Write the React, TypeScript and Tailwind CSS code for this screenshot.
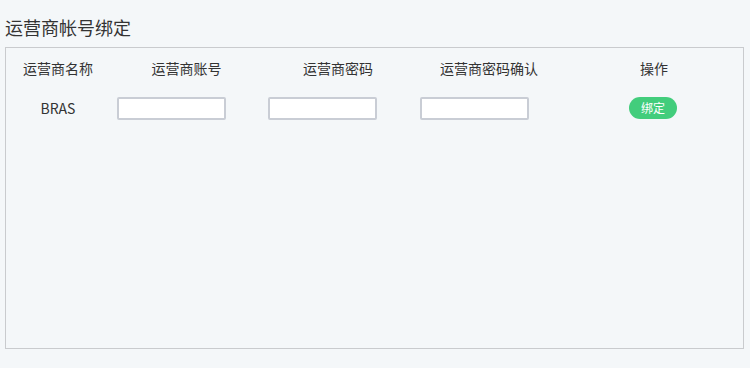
const font = "font-['Microsoft_YaHei','Noto_Sans_CJK_SC',sans-serif]";

function Field({ offset }: { offset: string }) {
  return (
    <div className={`flex items-center ${offset}`}>
      <input
        type="text"
        className="w-[109px] h-[23px] border-2 border-[#c9cdd5] bg-white outline-none rounded-[2px]"
      />
    </div>
  );
}

export default function App() {
  const headers = ["运营商名称", "运营商账号", "运营商密码", "运营商密码确认", "操作"];

  return (
    <div className={`w-[750px] h-[368px] bg-[#f4f7f9] px-[5px] pt-[15px] text-[#333] ${font}`}>
      <h1 className="text-[18px] leading-[24px] mb-[8px] text-[#333]">运营商帐号绑定</h1>

      <div className="w-[739px] h-[302px] border border-[#c9cbce]">
        <div className="grid grid-cols-[104px_153px_150px_152px_1fr] h-[40px] items-center text-[14px]">
          {headers.map((h) => (
            <div key={h} className="text-center">
              {h}
            </div>
          ))}
        </div>

        <div className="grid grid-cols-[104px_153px_150px_152px_1fr] h-[40px] items-center">
          <div className="text-center text-[14px]">BRAS</div>
          <Field offset="pl-[7px]" />
          <Field offset="pl-[5px]" />
          <Field offset="pl-[7px]" />
          <div className="flex justify-center pr-[2px]">
            <button className="w-[48px] h-[22px] rounded-full bg-[#42cd7c] text-white text-[12px] leading-none">
              绑定
            </button>
          </div>
        </div>
      </div>
    </div>
  );
}
